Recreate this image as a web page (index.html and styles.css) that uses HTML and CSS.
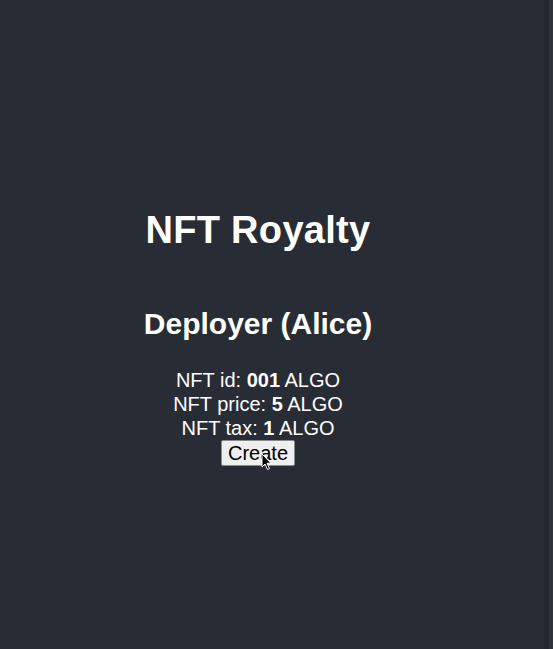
FILE: index.html
```html
<!DOCTYPE html>
<html lang="en">
<head>
<meta charset="utf-8">
<title>NFT Royalty</title>
<link rel="stylesheet" href="styles.css">
</head>
<body>
<div class="app">
  <main class="main">
    <h1 class="title">NFT Royalty</h1>
    <h2 class="subtitle">Deployer (Alice)</h2>
    <div class="info">
      <div class="line">NFT id: <b>001</b> ALGO</div>
      <div class="line">NFT price: <b>5</b> ALGO</div>
      <div class="line">NFT tax: <b>1</b> ALGO</div>
      <div class="btn-wrap">
        <button class="btn">Create</button>
        <svg class="cursor" width="12" height="18" viewBox="0 0 12 18"><path d="M1 1 L1 14 L4 11 L6.5 16.5 L8.5 15.5 L6 10.2 L10 10.2 Z" fill="#000" stroke="#fff" stroke-width="1"/></svg>
      </div>
    </div>
  </main>
  <div class="edge"></div>
</div>
</body>
</html>
```

FILE: styles.css
```css
html, body {
  margin: 0;
  padding: 0;
  height: 100%;
  background: #282c34;
}
body {
  font-family: "Liberation Sans", Arial, sans-serif;
  color: #ffffff;
}
.app {
  display: flex;
  height: 649px;
  overflow: hidden;
}
.main {
  width: 516px;
  display: flex;
  flex-direction: column;
  align-items: center;
  padding-top: 208px;
  box-sizing: border-box;
}
.edge {
  flex: 1;
  border-right: 4px solid #2d3138;
  box-shadow: inset -5px 0 0 #24272d;
}
.title {
  margin: 0;
  font-size: 38px;
  line-height: 44px;
  font-weight: 700;
  letter-spacing: 0.3px;
}
.subtitle {
  margin: 54px 0 0;
  font-size: 30px;
  line-height: 36px;
  font-weight: 700;
}
.info {
  margin-top: 26px;
  display: flex;
  flex-direction: column;
  align-items: center;
  font-size: 20px;
  line-height: 24px;
}
.line b {
  font-weight: 700;
}
.btn-wrap {
  position: relative;
}
.btn {
  font-family: "Liberation Sans", Arial, sans-serif;
  font-size: 20px;
  line-height: 22px;
  height: 26px;
  padding: 0 6px;
  color: #000;
  background: #efefef;
  border: 1px solid #8a8a8a;
  border-radius: 2px;
  display: block;
}
.cursor {
  position: absolute;
  left: 40px;
  top: 13px;
}
```
